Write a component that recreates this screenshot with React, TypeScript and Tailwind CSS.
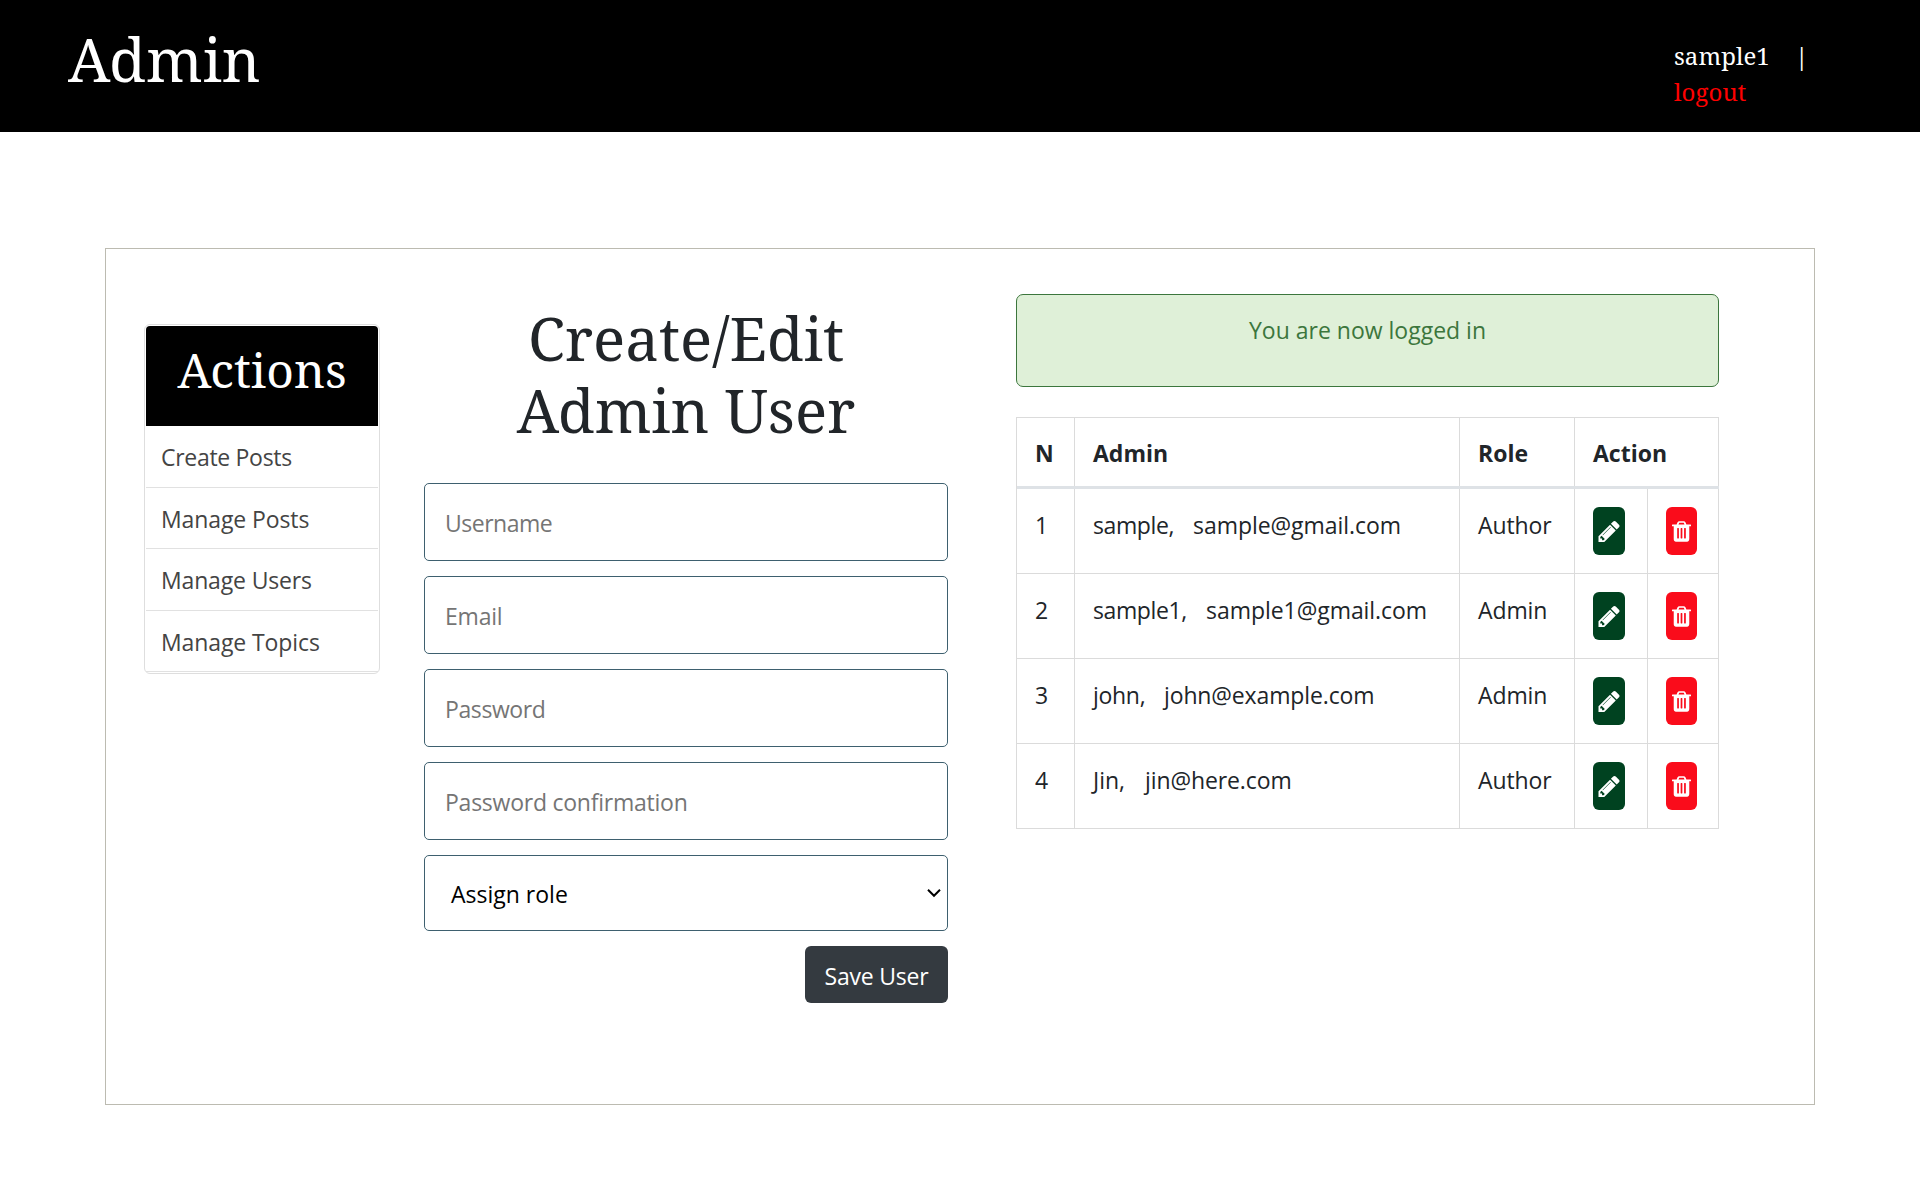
import React from 'react';

const serif = "font-['Noto_Serif',serif]";

type UserRow = { id: number; name: string; email: string; role: string; nameClass: string; emailClass: string };

const users: UserRow[] = [
  { id: 1, name: 'sample,', email: 'sample@gmail.com', role: 'Author', nameClass: 'w-[100px] tracking-[-0.4px]', emailClass: 'tracking-[-0.05px]' },
  { id: 2, name: 'sample1,', email: 'sample1@gmail.com', role: 'Admin', nameClass: 'w-[113px] tracking-[-0.4px]', emailClass: 'tracking-[-0.05px]' },
  { id: 3, name: 'john,', email: 'john@example.com', role: 'Admin', nameClass: 'w-[71px] tracking-[-0.3px]', emailClass: 'tracking-[-0.13px]' },
  { id: 4, name: 'Jin,', email: 'jin@here.com', role: 'Author', nameClass: 'w-[52px]', emailClass: 'tracking-[-0.1px]' },
];

const actions = [
  { label: 'Create Posts', className: 'h-[62px] tracking-[-0.3px]' },
  { label: 'Manage Posts', className: 'h-[61px] tracking-[-0.1px]' },
  { label: 'Manage Users', className: 'h-[62px] tracking-[-0.15px]' },
  { label: 'Manage Topics', className: 'h-[61px] tracking-[-0.1px]' },
];

const fields = [
  { label: 'Username', type: 'text', className: 'tracking-[-0.5px]' },
  { label: 'Email', type: 'email', className: 'tracking-[-0.2px]' },
  { label: 'Password', type: 'password', className: 'tracking-[-0.4px]' },
  { label: 'Password confirmation', type: 'password', className: 'tracking-[-0.24px]' },
];

function PencilIcon() {
  return (
    <svg viewBox="0 149 1515 1515" className="h-[21px] w-[22px]" fill="currentColor" aria-hidden="true">
      <path d="M363 1536l91-91-235-235-91 91v107h128v128h107zM886 608q0-22-22-22-10 0-17 7l-542 542q-7 7-7 17 0 22 22 22 10 0 17-7l542-542q7-7 7-17zM832 416l416 416-832 832h-416v-416zM1515 512q0 53-37 90l-166 166-416-416 166-165q36-38 90-38 53 0 91 38l235 234q37 39 37 91z" />
    </svg>
  );
}

function TrashIcon() {
  return (
    <svg viewBox="0 128 1408 1536" className="h-[21px] w-[19px]" fill="currentColor" aria-hidden="true">
      <path d="M512 1376v-704q0-14-9-23t-23-9h-64q-14 0-23 9t-9 23v704q0 14 9 23t23 9h64q14 0 23-9t9-23zm256 0v-704q0-14-9-23t-23-9h-64q-14 0-23 9t-9 23v704q0 14 9 23t23 9h64q14 0 23-9t9-23zm256 0v-704q0-14-9-23t-23-9h-64q-14 0-23 9t-9 23v704q0 14 9 23t23 9h64q14 0 23-9t9-23zm-544-992h448l-48-117q-7-9-17-11h-317q-10 2-17 11zm928 32v64q0 14-9 23t-23 9h-96v948q0 83-47 143.500t-113 60.500h-832q-66 0-113-58.500t-47-141.500v-952h-96q-14 0-23-9t-9-23v-64q0-14 9-23t23-9h309l70-167q15-37 54-63t79-26h320q40 0 79 26t54 63l70 167h309q14 0 23 9t9 23z" />
    </svg>
  );
}

function Header() {
  return (
    <header className={`${serif} flex h-[132px] justify-between bg-black text-white`}>
      <h1 className="pt-[23px] pl-[68px] text-[60px] leading-[72px]">Admin</h1>
      <div className="w-[246px] pt-[38px] text-[24px] leading-[36px]">
        <div className="flex">
          <span className="w-[121px] tracking-[0.05px]">sample1</span>
          <span>|</span>
        </div>
        <a href="#" className="tracking-[0.1px] text-[#ff0000]">logout</a>
      </div>
    </header>
  );
}

function ActionsMenu() {
  return (
    <nav className="mt-[75px] ml-[38px] h-[350px] w-[236px] rounded-md border border-[#dedede] p-px">
      <h2 className={`${serif} h-[100px] rounded-t-sm bg-black text-center text-[48px] leading-[87px] text-white`}>Actions</h2>
      {actions.map((a) => (
        <a key={a.label} href="#" className={`${a.className} block border-b border-[#e1e1e1] pt-px pl-[15px] leading-[60px] text-[#444]`}>
          {a.label}
        </a>
      ))}
    </nav>
  );
}

function UserForm() {
  return (
    <form className="mt-[53px] ml-[44px] flex w-[524px] flex-col gap-[15px]">
      <h2 className={`${serif} mb-[22px] text-center text-[60px] leading-[72px] text-[#212529]`}>
        Create/Edit Admin User
      </h2>
      {fields.map((f) => (
        <input
          key={f.label}
          type={f.type}
          placeholder={f.label}
          className={`${f.className} block h-[78px] w-full rounded-[5px] border border-[#3e606f] pt-[2px] pl-5 outline-none placeholder:text-[#757575] placeholder:opacity-100`}
        />
      ))}
      <div className="flex h-[76px] items-center justify-between rounded-[5px] border border-[#3e606f] pr-[6px] pl-[26px] text-black">
        <span className="pt-[2px]">Assign role</span>
        <svg viewBox="0 0 14 10" className="h-[10px] w-[14px]" fill="none" stroke="currentColor" strokeWidth="2" aria-hidden="true">
          <path d="M1 1.800L7 7.800l6-6" />
        </svg>
      </div>
      <button type="button" className="flex h-[57px] w-[143px] items-center justify-center self-end rounded-md bg-[#343a40] pt-[3px] text-white">
        <span className="tracking-[-0.2px] whitespace-nowrap">Save User</span>
      </button>
    </form>
  );
}

const cell = 'border-r border-[#dbdbdb] pl-[18px]';

function UsersPanel() {
  return (
    <section className="mt-[45px] ml-[68px] w-[703px] text-[#212529]">
      <div className="h-[93px] rounded-[7px] border border-[#3c763d] bg-[#dff0d8] text-center leading-[71px] text-[#3c763d]">
        You are now logged in
      </div>
      <div className="mt-[30px] border-t border-l border-[#dbdbdb]">
        <div className="grid h-[71px] grid-cols-[58px_385px_115px_144px] border-b-[3px] border-[#dee2e6] leading-[71px] font-bold">
          <div className={`${cell} h-[68px]`}>N</div>
          <div className={`${cell} h-[68px]`}>Admin</div>
          <div className={`${cell} h-[68px]`}>Role</div>
          <div className={`${cell} h-[68px]`}>Action</div>
        </div>
        {users.map((u) => (
          <div key={u.id} className="grid h-[85px] grid-cols-[58px_385px_115px_73px_71px] border-b border-[#dbdbdb] leading-[72px]">
            <div className={cell}>{u.id}</div>
            <div className={`${cell} flex`}>
              <span className={u.nameClass}>{u.name}</span>
              <span className={u.emailClass}>{u.email}</span>
            </div>
            <div className={`${cell} tracking-[-0.1px]`}>{u.role}</div>
            <div className={`${cell} pt-[18px]`}>
              <button type="button" aria-label="Edit" className="flex h-12 w-8 items-center rounded-md bg-[#004220] pl-[5px] text-white">
                <PencilIcon />
              </button>
            </div>
            <div className={`${cell} pt-[18px]`}>
              <button type="button" aria-label="Delete" className="flex h-12 w-[31px] items-center justify-center rounded-md bg-[#fa0c1b] text-white">
                <TrashIcon />
              </button>
            </div>
          </div>
        ))}
      </div>
    </section>
  );
}

export default function App() {
  return (
    <div className="h-[1180px] w-[1920px] overflow-hidden bg-white font-['Open_Sans',sans-serif] text-[23px]">
      <Header />
      <main className="mt-[116px] ml-[105px] flex h-[857px] w-[1710px] items-start border border-[#bcbbb1]">
        <ActionsMenu />
        <UserForm />
        <UsersPanel />
      </main>
    </div>
  );
}
